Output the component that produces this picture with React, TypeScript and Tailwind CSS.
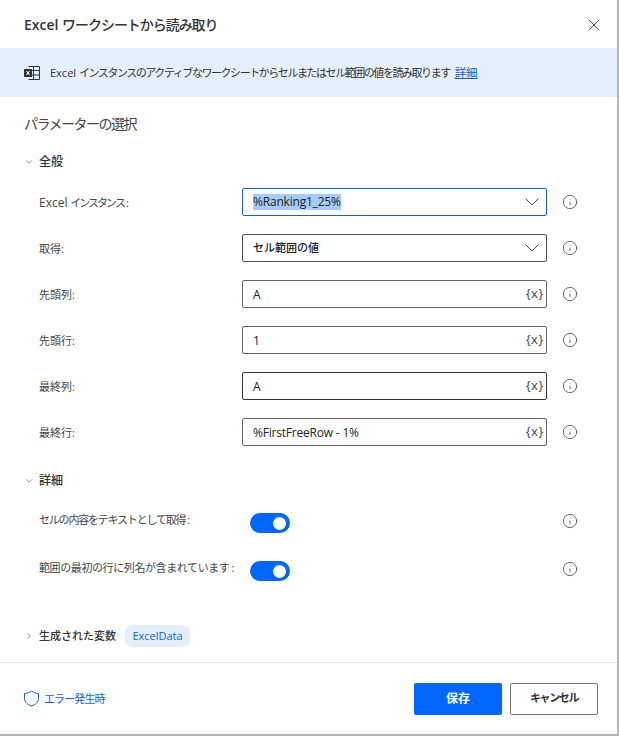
import { ChevronDown, ChevronRight, Info, X } from "lucide-react";

const FONT = "[font-family:'Open_Sans','Noto_Sans_CJK_JP',sans-serif]";

function InfoIcon() {
  return <Info className="w-4 h-4 text-[#444]" strokeWidth={1.2} />;
}

function Row({ label, children }: { label: React.ReactNode; children: React.ReactNode }) {
  return (
    <div className="flex items-center h-7">
      <div className="w-[242px] pl-[39px] pt-[2px] text-[11px] text-[#444] shrink-0">{label}</div>
      <div className="w-[305px] shrink-0">{children}</div>
      <div className="ml-[15px] flex"><InfoIcon /></div>
    </div>
  );
}

function Field({ value, strong }: { value: string; strong?: boolean }) {
  return (
    <div className={`h-7 rounded-[2px] border flex items-center justify-between pl-[10px] pr-[2px] text-xs tracking-[-0.2px] text-[#222] ${strong ? "border-[#333]" : "border-[#666]"}`}>
      <span className="pt-[2px]">{value}</span>
      <span className="text-[13px] tracking-[0.6px] text-[#444]">{"{x}"}</span>
    </div>
  );
}

function Toggle({ label, tracking }: { label: string; tracking: string }) {
  return (
    <div className="flex items-center h-5">
      <div className="w-[250px] pl-[39px] text-[11px] text-[#444] shrink-0 -mt-[6px] whitespace-nowrap">
        <span className={tracking}>{label}</span>
        <span className="ml-[2px]">:</span>
      </div>
      <div className="w-10 h-5 rounded-full bg-[#0066ff] flex items-center justify-end pr-1 shrink-0">
        <div className="w-[13px] h-[13px] rounded-full bg-white" />
      </div>
      <div className="ml-[272px] -mt-1 flex"><InfoIcon /></div>
    </div>
  );
}

function SectionHead({ label }: { label: string }) {
  return (
    <div className="flex items-center h-5 pl-6 gap-[5px] text-xs font-medium text-[#333]">
      <ChevronDown className="w-[10px] h-[10px] text-[#555]" strokeWidth={1.5} />
      <span>{label}</span>
    </div>
  );
}

export default function App() {
  return (
    <div className={`w-[619px] h-[736px] bg-white border-r-2 border-b-2 border-[#b4b4b4] flex flex-col overflow-hidden ${FONT}`}>
      <div className="h-12 pt-px flex items-center justify-between pl-6 pr-[13px] shrink-0">
        <h1 className="text-sm font-medium text-[#333]">
          <span className="font-semibold">Excel</span> <span className="tracking-[-1.05px]">ワークシートから読み取り</span>
        </h1>
        <X className="w-5 h-5 text-[#333]" strokeWidth={1.1} />
      </div>

      <div className="h-[49px] bg-[#e5effc] flex items-center pl-6 gap-[10px] text-[11px] text-[#333] shrink-0">
        <svg width="16" height="16" viewBox="0 0 16 16" fill="none" className="shrink-0">
          <path d="M4.5 1.5h11v13h-11M4.5 5.500h11M4.500 10h11M9.500 1.500v13" stroke="#333" strokeWidth="1" />
          <rect x="0" y="4" width="8" height="8" fill="#333" />
          <path d="M2.500 6l3 4M5.500 6l-3 4" stroke="#fff" strokeWidth="1" />
        </svg>
        <span className="whitespace-nowrap">
          Excel <span className="tracking-[-1.45px]">インスタンスのアクティブなワークシートからセルまたはセル範囲の値を読み取ります</span>{" "}
          <span className="ml-[2px] text-[11.5px] text-[#1a5fc4] underline">詳細</span>
        </span>
      </div>

      <div className="flex-1 flex flex-col">
        <div className="pl-6 mt-4 text-sm tracking-[-1.5px] text-[#444] h-[22px] leading-[22px]">パラメーターの選択</div>
        <div className="mt-[17px]"><SectionHead label="全般" /></div>

        <div className="mt-4 flex flex-col gap-[18px]">
          <Row label={<><span className="text-xs">Excel</span> <span className="tracking-[-2px]">インスタンス</span><span className="ml-[2px]">:</span></>}>
            <div className="h-7 rounded-[2px] border border-[#1565c0] flex items-center justify-between pl-[10px] pr-[2px] text-xs tracking-[-0.2px] text-[#222]">
              <span className="bg-[#a6ccf5]">%Ranking1_25%</span>
              <ChevronDown className="w-6 h-6 text-[#444]" strokeWidth={1} />
            </div>
          </Row>
          <Row label="取得:">
            <div className="h-7 rounded-[2px] border border-[#555] flex items-center justify-between pl-[10px] pr-[2px] text-[11px] font-medium text-[#222]">
              <span>セル範囲の値</span>
              <ChevronDown className="w-6 h-6 text-[#444]" strokeWidth={1} />
            </div>
          </Row>
          <Row label="先頭列:"><Field value="A" /></Row>
          <Row label="先頭行:"><Field value="1" /></Row>
          <Row label="最終列:"><Field value="A" strong /></Row>
          <Row label="最終行:"><Field value="%FirstFreeRow - 1%" /></Row>
        </div>

        <div className="mt-[25px]"><SectionHead label="詳細" /></div>

        <div className="mt-[22px] flex flex-col gap-7">
          <Toggle label="セルの内容をテキストとして取得" tracking="tracking-[-1.2px]" />
          <Toggle label="範囲の最初の行に列名が含まれています" tracking="tracking-[-0.4px]" />
        </div>

        <div className="mt-[43px] flex items-center h-6 pl-6 text-[11px] font-medium text-[#333]">
          <ChevronRight className="w-[10px] h-[10px] text-[#555]" strokeWidth={1.5} />
          <span className="ml-[5px]">生成された変数</span>
          <span className="ml-[9px] h-[22px] w-[65px] justify-center rounded-[8px] bg-[#e5effc] text-[#1a5fc4] font-normal text-[11px] flex items-center">ExcelData</span>
        </div>
      </div>

      <div className="h-[72px] border-t border-[#e6e6e6] flex items-center justify-between pl-6 pr-[19px] shrink-0">
        <div className="flex items-center gap-[5px] text-[#1a5fc4] text-[11px]">
          <svg width="15" height="17" viewBox="0 0 15 17" fill="none">
            <path d="M7.500 1C5.500 2.600 3 3.500.5 3.500v5c0 3.500 3 6 7 7.500 4-1.500 7-4 7-7.500v-5C12 3.500 9.500 2.600 7.500 1Z" stroke="#1a5fc4" strokeWidth="1" />
          </svg>
          <span className="tracking-[-0.9px] pt-[2px]">エラー発生時</span>
        </div>
        <div className="flex gap-2">
          <button className="w-[88px] h-8 rounded-[2px] bg-[#0066ff] text-white text-xs font-semibold">保存</button>
          <button className="w-[88px] h-8 rounded-[2px] border border-[#777] bg-white text-[#333] text-[11px] tracking-[-1.400px] font-semibold">キャンセル</button>
        </div>
      </div>
    </div>
  );
}
